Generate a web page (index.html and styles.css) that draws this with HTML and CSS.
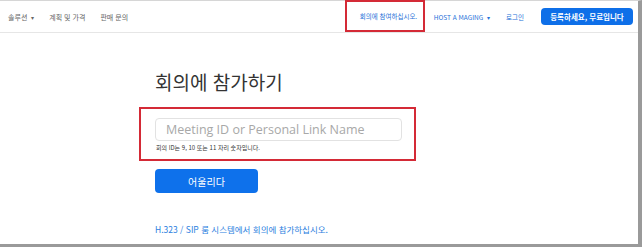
FILE: index.html
```html
<!DOCTYPE html>
<html lang="ko">
<head>
    <meta charset="UTF-8">
    <meta name="viewport" content="width=device-width, initial-scale=1.0">
    <title>회의에 참가하기</title>
    <link rel="stylesheet" href="styles.css">
</head>
<body>
    <div class="frame">
        <nav class="topbar">
            <div class="nav-left">
                <a class="nav-link">솔루션 <span class="caret">▾</span></a>
                <a class="nav-link">계획 및 가격</a>
                <a class="nav-link">판매 문의</a>
            </div>
            <div class="nav-right">
                <a class="nav-link blue marked">회의에 참여하십시오.</a>
                <a class="nav-link blue host">HOST A MAGING <span class="caret">▾</span></a>
                <a class="nav-link blue">로그인</a>
                <button class="signup">등록하세요, 무료입니다</button>
            </div>
        </nav>

        <main class="join">
            <h1 class="join-title">회의에 참가하기</h1>

            <div class="input-group">
                <input class="meeting-id" type="text" placeholder="Meeting ID or Personal Link Name">
                <p class="hint">회의 ID는 9, 10 또는 11 자리 숫자입니다.</p>
            </div>

            <button class="join-btn">어울리다</button>

            <a class="sip-link">H.323 / SIP 룸 시스템에서 회의에 참가하십시오.</a>
        </main>
    </div>
</body>
</html>
```

FILE: styles.css
```css
body {
    margin: 0;
    background: #fff;
    font-family: "Noto Sans CJK KR", "Noto Sans", sans-serif;
}

.frame {
    width: 642px;
    height: 247px;
    border-top: 1px solid #d6d6d6;
    border-right: 4px solid #9a9a9a;
    border-bottom: 3px solid #9a9a9a;
    box-sizing: border-box;
    background: #fff;
}

.topbar {
    display: flex;
    justify-content: space-between;
    align-items: center;
    height: 31px;
    border-bottom: 1px solid #e6e6e6;
    padding: 0 5px 0 8px;
}

.nav-left,
.nav-right {
    display: flex;
    align-items: center;
    height: 100%;
}

.nav-link {
    font-size: 7px;
    color: #666;
    margin-right: 15px;
    white-space: nowrap;
}

.caret {
    font-size: 6px;
    margin-left: 2px;
}

.nav-link.blue {
    font-size: 6.5px;
    color: #2470d8;
}

.marked {
    display: flex;
    align-items: center;
    box-sizing: border-box;
    width: 80px;
    height: 32px;
    margin-top: -1px;
    padding-left: 13px;
    border: 2px solid #d42a36;
    margin-right: 9px;
}

.host {
    margin-right: 16px;
}

.signup {
    height: 17px;
    width: 92px;
    margin-left: 2px;
    padding: 0;
    border: none;
    border-radius: 4px;
    background-color: #0e6fe8;
    color: white;
    font-family: "Noto Sans CJK KR", sans-serif;
    font-size: 7.5px;
    font-weight: bold;
}

.join {
    padding-left: 155px;
    display: flex;
    flex-direction: column;
    align-items: flex-start;
}

.join-title {
    margin: 36px 0 0 0;
    font-size: 19px;
    font-weight: normal;
    color: #333;
    line-height: 26px;
}

.input-group {
    margin: 12px 0 0 -16px;
    padding: 6px 10px 0 14px;
    width: 249px;
    height: 44px;
    border: 2px solid #d42a36;
}

.meeting-id {
    box-sizing: border-box;
    width: 247px;
    height: 23px;
    padding: 0 10px;
    border: 1px solid #e2e2e2;
    border-radius: 4px;
    font-family: "Open Sans", sans-serif;
    font-size: 12.5px;
    color: #333;
}

.meeting-id::placeholder {
    color: #a8a8a8;
}

.hint {
    margin: 2px 0 0 1px;
    font-size: 6px;
    color: #333;
}

.join-btn {
    margin-top: 8px;
    width: 103px;
    height: 24px;
    border: none;
    border-radius: 4px;
    background-color: #0e71eb;
    color: white;
    font-family: "Noto Sans CJK KR", sans-serif;
    font-size: 10px;
}

.sip-link {
    margin-top: 30px;
    font-size: 8.5px;
    color: #2d7fe0;
}
```
